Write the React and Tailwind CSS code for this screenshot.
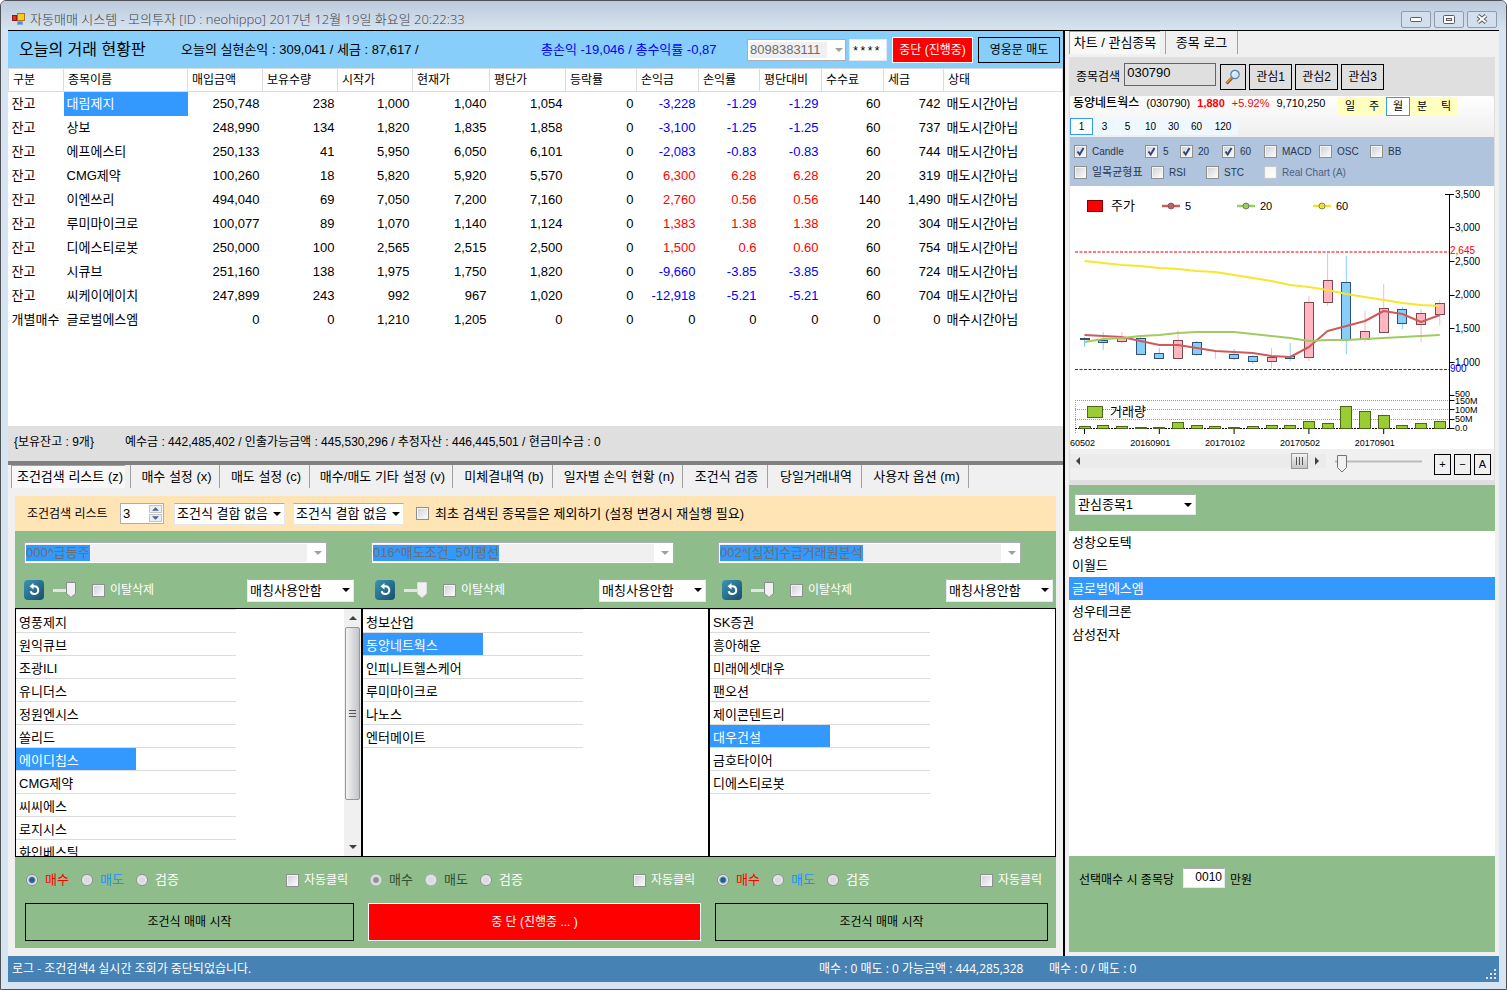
import { useState } from "react";
import clsx from "clsx";

const COLUMNS = [
  { label: "구분", width: "w-[55px]" },
  { label: "종목이름", width: "w-[124px]" },
  { label: "매입금액", width: "w-[75px]" },
  { label: "보유수량", width: "w-[75px]" },
  { label: "시작가", width: "w-[75px]" },
  { label: "현재가", width: "w-[77px]" },
  { label: "평단가", width: "w-[76px]" },
  { label: "등락률", width: "w-[71px]" },
  { label: "손익금", width: "w-[62px]" },
  { label: "손익률", width: "w-[61px]" },
  { label: "평단대비", width: "w-[62px]" },
  { label: "수수료", width: "w-[62px]" },
  { label: "세금", width: "w-[60px]" },
  { label: "상태", width: "" },
];

const ROWS = [
  ["잔고", "대림제지", "250,748", "238", "1,000", "1,040", "1,054", "0", "-3,228", "-1.29", "-1.29", "60", "742", "매도시간아님"],
  ["잔고", "상보", "248,990", "134", "1,820", "1,835", "1,858", "0", "-3,100", "-1.25", "-1.25", "60", "737", "매도시간아님"],
  ["잔고", "에프에스티", "250,133", "41", "5,950", "6,050", "6,101", "0", "-2,083", "-0.83", "-0.83", "60", "744", "매도시간아님"],
  ["잔고", "CMG제약", "100,260", "18", "5,820", "5,920", "5,570", "0", "6,300", "6.28", "6.28", "20", "319", "매도시간아님"],
  ["잔고", "이엔쓰리", "494,040", "69", "7,050", "7,200", "7,160", "0", "2,760", "0.56", "0.56", "140", "1,490", "매도시간아님"],
  ["잔고", "루미마이크로", "100,077", "89", "1,070", "1,140", "1,124", "0", "1,383", "1.38", "1.38", "20", "304", "매도시간아님"],
  ["잔고", "디에스티로봇", "250,000", "100", "2,565", "2,515", "2,500", "0", "1,500", "0.6", "0.60", "60", "754", "매도시간아님"],
  ["잔고", "시큐브", "251,160", "138", "1,975", "1,750", "1,820", "0", "-9,660", "-3.85", "-3.85", "60", "724", "매도시간아님"],
  ["잔고", "씨케이에이치", "247,899", "243", "992", "967", "1,020", "0", "-12,918", "-5.21", "-5.21", "60", "704", "매도시간아님"],
  ["개별매수", "글로벌에스엠", "0", "0", "1,210", "1,205", "0", "0", "0", "0", "0", "0", "0", "매수시간아님"],
];

const TABS = [
  { label: "조건검색 리스트 (z)", width: "w-[114px]" },
  { label: "매수 설정 (x)", width: "w-[90px]" },
  { label: "매도 설정 (c)", width: "w-[90px]" },
  { label: "매수/매도 기타 설정 (v)", width: "w-[143px]" },
  { label: "미체결내역 (b)", width: "w-[100px]" },
  { label: "일자별 손익 현황 (n)", width: "w-[130px]" },
  { label: "조건식 검증", width: "w-[85px]" },
  { label: "당일거래내역", width: "w-[94px]" },
  { label: "사용자 옵션 (m)", width: "w-[107px]" },
];

const PANELS = [
  {
    id: "p1",
    condition: "000^급등주",
    items: ["영풍제지", "원익큐브", "조광ILI", "유니더스", "정원엔시스", "쏠리드", "에이디칩스", "CMG제약", "씨씨에스", "로지시스", "화인베스틸"],
    selected: 6,
    scroll: true,
    tools: "pl-[9px] pr-2",
    radios: "pl-[11px]",
    action: "pl-[10px] pr-2",
  },
  {
    id: "p2",
    condition: "016^매도조건_5이평선",
    items: ["청보산업", "동양네트웍스", "인피니트헬스케어", "루미마이크로", "나노스", "엔터메이트"],
    selected: 1,
    running: true,
    tools: "pl-[13px] pr-[3px]",
    radios: "pl-2",
    action: "pl-[6px] pr-2",
  },
  {
    id: "p3",
    condition: "002^[실전]수급거래원분석",
    items: ["SK증권", "흥아해운", "미래에셋대우", "팬오션", "제이콘텐트리", "대우건설", "금호타이어", "디에스티로봇"],
    selected: 5,
    tools: "pl-[13px] pr-[3px]",
    radios: "pl-2",
    action: "pl-[6px] pr-2",
  },
];

const UP = "#ffb6c1";
const DOWN = "#87cefa";

// body top, body bottom, high, low
const CANDLES = [
  [152, 153, 151, 161, DOWN], [154, 156, 146, 164, DOWN], [152, 155, 146, 157, UP], [152, 168, 151, 169, DOWN],
  [167, 172, 162, 172, DOWN], [154, 172, 144, 173, UP], [156, 168, 155, 170, DOWN], [168, 168, 164, 173, UP],
  [168, 172, 163, 174, DOWN], [170, 175, 169, 178, DOWN], [171, 175, 162, 182, UP], [170, 172, 157, 175, DOWN],
  [116, 171, 110, 175, UP], [94, 116, 67, 120, UP], [96, 153, 70, 168, DOWN], [145, 153, 125, 156, UP],
  [122, 146, 98, 146, UP], [123, 137, 121, 143, DOWN], [127, 138, 123, 156, UP], [117, 128, 114, 139, UP],
];
const VOLUMES = [2, 3, 2, 1, 1, 6, 3, 2, 1, 2, 3, 3, 7, 5, 22, 17, 13, 3, 5, 7];
const MA5 = [149, 150, 151, 155, 159, 159, 162, 165, 166, 167, 170, 171, 161, 145, 140, 135, 125, 128, 136, 129];
const MA20 = [156, 153, 152, 150, 149, 147, 146, 146, 146, 148, 150, 152, 155, 154, 154, 153, 152, 151, 150, 149];
const MA60 = [75, 77, 79, 80, 82, 83, 85, 86, 89, 92, 95, 99, 101, 104, 108, 111, 114, 117, 119, 120];

const cx = (i) => 14.5 + 18.7 * i;
const points = (values) => values.map((v, i) => `${cx(i)},${v}`).join(" ");

const Arrow = ({ dir = "down", className }) => {
  const d = { down: "M0 0h8l-4 4z", up: "M0 4h8l-4 -4z", left: "M6 0v8l-4 -4z", right: "M2 0v8l4 -4z" }[dir];
  const tall = dir === "left" || dir === "right";
  return (
    <svg className={className} width="8" height={tall ? 8 : 4} viewBox={tall ? "0 0 8 8" : "0 0 8 4"} fill="currentColor" aria-hidden="true">
      <path d={d} />
    </svg>
  );
};

const Check = ({ label, checked, disabled, className, textClass }) => (
  <label className={clsx("flex items-center whitespace-nowrap", className)}>
    <span className="grid size-[13px] shrink-0">
      <input
        type="checkbox"
        defaultChecked={checked}
        disabled={disabled}
        className="peer col-start-1 row-start-1 size-[13px] appearance-none border border-[#8e8f8f] bg-linear-to-br from-[#cbcfd5] to-white shadow-[inset_0_0_0_1px_#f4f4f4] disabled:border-[#c5c9ce] disabled:from-[#f4f4f4]"
      />
      <svg className="pointer-events-none invisible col-start-1 row-start-1 peer-checked:visible" viewBox="0 0 13 13" fill="none" stroke="#31447c" strokeWidth="2" aria-hidden="true">
        <path d="M3.5 6.5l2.2 3 3.8-6.5" />
      </svg>
    </span>
    <span className={textClass}>{label}</span>
  </label>
);

const Select = ({ label, value, className }) => (
  <span className={clsx("relative block shrink-0", className)}>
    <select aria-label={label} className="block size-full appearance-none border border-[#e3e9ef] border-t-[#abadb3] bg-white pl-[2px] text-[13px] leading-none">
      <option>{value}</option>
    </select>
    <Arrow className="pointer-events-none absolute top-1/2 right-1 -mt-[2px]" />
  </span>
);

const Slider = ({ label, faded }) => (
  <span className="relative block h-[18px] w-[25px]">
    <input type="range" aria-label={label} defaultValue="100" disabled={faded} className="absolute inset-0 w-full opacity-0" />
    <svg className="pointer-events-none" width="25" height="18" viewBox="0 0 25 18" aria-hidden="true">
      <path d="M0 9.5h14" stroke="#e4e4e4" strokeWidth="3" />
      <path d="M13.5 1.5h9v11l-4.5 4-4.5-4z" fill="#f1f1f1" stroke={faded ? "#dddddd" : "#858b8e"} />
    </svg>
  </span>
);

const TitleBar = () => (
  <header className="flex h-[29px] items-center bg-linear-to-b from-[#bccadb] to-[#d6e3f0] pt-[7px] pr-[9px] pl-[11px]">
    <svg width="13" height="13" viewBox="0 0 13 13" aria-hidden="true">
      <rect x="5.5" y=".5" width="7" height="7" fill="#f7c73a" stroke="#a87a10" />
      <rect x=".5" y="2.5" width="4" height="5" fill="#e0311c" stroke="#94190c" />
      <rect x="5.5" y="8.5" width="5" height="3" fill="#4f86e8" stroke="#8fa9d8" />
    </svg>
    <h1 className="flex-1 pl-[5px] font-['Open_Sans','Noto_Sans_CJK_KR',sans-serif] text-[13px] leading-none font-light whitespace-nowrap text-[#3c4045]">
      자동매매 시스템 - 모의투자 [ID : neohippo] 2017년 12월 19일 화요일 20:22:33
    </h1>
    <div className="flex gap-[3px]">
      <button aria-label="최소화" className="grid h-[17px] w-[30px] place-items-center rounded-xs border border-[#8f9bab] bg-[#d3dfec]">
        <svg width="12" height="5" viewBox="0 0 12 5"><rect x=".5" y=".5" width="11" height="4" rx="1" fill="#fff" stroke="#575c68" /></svg>
      </button>
      <button aria-label="최대화" className="grid h-[17px] w-[30px] place-items-center rounded-xs border border-[#8f9bab] bg-[#d3dfec]">
        <svg width="12" height="9" viewBox="0 0 12 9">
          <rect x=".5" y=".5" width="11" height="8" rx="1" fill="#fff" stroke="#575c68" />
          <rect x="3.5" y="3.5" width="5" height="2" fill="#d3dfec" stroke="#575c68" />
        </svg>
      </button>
      <button aria-label="닫기" className="grid h-[17px] w-[30px] place-items-center rounded-xs border border-[#8f9bab] bg-[#d3dfec]">
        <svg width="12" height="10" viewBox="0 0 12 10">
          <path d="M2 1.500l8 7M10 1.500l-8 7" stroke="#575c68" strokeWidth="4" />
          <path d="M2.200 1.700l7.600 6.600M9.800 1.700l-7.600 6.600" stroke="#fff" strokeWidth="2" />
        </svg>
      </button>
    </div>
  </header>
);

const Summary = () => (
  <div className="flex h-[37px] shrink-0 items-center bg-[#87cefa] pr-[3px] pl-[11px] text-[13px] whitespace-nowrap">
    <h2 className="w-[162px] text-[16px]">오늘의 거래 현황판</h2>
    <p className="flex-1">오늘의 실현손익 : 309,041 / 세금 : 87,617 /</p>
    <p className="w-[206px] text-[#0000ff]">총손익 -19,046 / 총수익률 -0,87</p>
    <span className="relative mr-[3px] block h-[22px] w-[99px]">
      <select aria-label="계좌번호" disabled className="block size-full appearance-none border border-[#abadb3] bg-[#f0f0f0] pl-[2px] text-[13px] text-[#6d6d6d] opacity-100 shadow-[inset_-18px_0_0_0_#fff,inset_0_0_0_2px_#fff]">
        <option>8098383111</option>
      </select>
      <Arrow className="pointer-events-none absolute top-[9px] right-[3px] text-[#a0a0a0]" />
    </span>
    <input aria-label="비밀번호" defaultValue="****" className="mr-[5px] h-[22px] w-[38px] border border-[#e3e9ef] bg-white px-[2px] pt-1 font-['Liberation_Mono',monospace] text-[12px]" />
    <button className="mr-[5px] h-[26px] w-[81px] border border-white bg-[#ff0000] text-[12px] text-white">중단 (진행중)</button>
    <button className="h-[26px] w-[82px] border border-black text-[12px]">영웅문 매도</button>
  </div>
);

const HoldingsTable = () => (
  <div className="h-[358px] bg-white">
    <table className="w-full table-fixed border-collapse text-[13px] whitespace-nowrap">
      <thead>
        <tr className="h-[23px]">
          {COLUMNS.map((col) => (
            <th key={col.label} className={clsx("border border-[#dcdcdc] pl-1 text-left text-[12px] leading-none font-normal", col.width)}>
              {col.label}
            </th>
          ))}
        </tr>
      </thead>
      <tbody>
        {ROWS.map((row, r) => (
          <tr key={r} className="h-6">
            {row.map((cell, c) => {
              const text = c < 2 || c === 13;
              const profit = c >= 8 && c <= 10;
              return (
                <td
                  key={c}
                  className={clsx(
                    "p-0 leading-none",
                    text ? "pl-[3px]" : "pr-[3px] text-right",
                    profit && cell.startsWith("-") && "text-[#0000ff]",
                    profit && !cell.startsWith("-") && cell !== "0" && "text-[#ff0000]",
                    r === 0 && c === 1 && "bg-[#3399ff] text-white"
                  )}
                >
                  {cell}
                </td>
              );
            })}
          </tr>
        ))}
      </tbody>
    </table>
  </div>
);

const ConditionBar = () => (
  <div className="flex h-[35px] items-center bg-[#ffe4b5] pl-3 text-[12px] whitespace-nowrap">
    <label htmlFor="condition-count" className="w-[93px]">조건검색 리스트</label>
    <span className="mr-[10px] flex h-[21px] w-[44px] border border-[#abadb3] bg-white">
      <input id="condition-count" defaultValue="3" className="min-w-0 flex-1 pl-[2px] text-[13px]" />
      <span className="flex w-[15px] flex-col gap-px p-px text-[#4b5f97]">
        <button aria-label="증가" className="grid flex-1 place-items-center border border-[#c4c4c4] bg-[#eeeeee]"><Arrow dir="up" className="w-[7px]" /></button>
        <button aria-label="감소" className="grid flex-1 place-items-center border border-[#c4c4c4] bg-[#eeeeee]"><Arrow className="w-[7px]" /></button>
      </span>
    </span>
    <Select label="조건식 결합 1" value="조건식 결합 없음" className="mr-2 h-[22px] w-[111px]" />
    <Select label="조건식 결합 2" value="조건식 결합 없음" className="mr-3 h-[22px] w-[111px]" />
    <Check label="최초 검색된 종목들은 제외하기 (설정 변경시 재실행 필요)" textClass="pl-[6px] text-[13px]" />
  </div>
);

const StockList = ({ items, initial, scroll }) => {
  const [selected, setSelected] = useState(initial);
  return (
    <div className="flex h-[249px] overflow-hidden border border-black bg-white">
      <ul className="min-w-0 flex-1 overflow-hidden text-[13px]">
        {items.map((item, i) => (
          <li key={item} className="h-[23px] w-[220px] border-t border-[#dcdcdc] last:h-6 last:border-b">
            <button
              onClick={() => setSelected(i)}
              className={clsx("block h-[22px] w-[120px] pt-[2px] pl-[3px] text-left leading-none whitespace-nowrap", i === selected && "bg-[#3399ff] text-white")}
            >
              {item}
            </button>
          </li>
        ))}
      </ul>
      {scroll && (
        <div className="flex w-[17px] flex-col items-center bg-[#f0f0f0] text-[#404040]" aria-hidden="true">
          <div className="grid h-[18px] place-items-center"><Arrow dir="up" /></div>
          <div className="grid h-[173px] w-[15px] place-items-center rounded-xs border border-[#979797] bg-linear-to-r from-[#f3f3f3] to-[#c3c5c9]">
            <div className="h-[7px] w-[7px] border-y border-[#555] py-[2px]"><div className="border-t border-[#555]" /></div>
          </div>
          <div className="mt-auto grid h-[18px] place-items-center"><Arrow /></div>
        </div>
      )}
    </div>
  );
};

const Radio = ({ name, label, checked, disabled, textClass }) => (
  <label className="flex w-[55px] items-center">
    <input
      type="radio"
      name={name}
      defaultChecked={checked}
      disabled={disabled}
      className="size-3 appearance-none rounded-full border border-[#8e8f8f] bg-radial from-[#d9dde2] from-40% to-white checked:from-[#1f5f8a] checked:from-30% checked:to-[#e8eef2] checked:to-60% disabled:border-[#b5b9bd] disabled:checked:from-[#909090]"
    />
    <span className={clsx("pl-[7px]", textClass)}>{label}</span>
  </label>
);

const ConditionPanel = ({ panel }) => {
  const { id, condition, items, selected, scroll, running, tools, radios, action } = panel;
  return (
    <section className="min-w-0">
      <div className="h-[77px] pt-[11px]">
        <div className="ml-[9px] flex h-[22px] w-[303px] items-center border border-[#abadb3] bg-white p-px">
          <div className="flex h-full min-w-0 flex-1 items-center bg-[#f0f0f0]">
            <input aria-label="조건식" readOnly value={condition} className="h-4 [field-sizing:content] bg-[#3399ff] text-[13px] text-[#6d6d6d]" />
          </div>
          <button aria-label="조건식 열기" className="grid w-[18px] place-items-center pl-1 text-[#a0a0a0]"><Arrow /></button>
        </div>
        <div className={clsx("mt-[14px] flex h-[24px] items-center", tools)}>
          <button aria-label="새로고침" className="mr-[9px] grid size-5 place-items-center rounded-sm bg-linear-to-br from-[#3d94b8] to-[#174f6b]">
            <svg width="14" height="14" viewBox="0 0 14 14" aria-hidden="true">
              <path d="M5.500 3.200h2a3.900 3.900 0 1 1-3.900 5" fill="none" stroke="#fff" strokeWidth="2" />
              <path d="M6.500 0v6.400l-4-3.200z" fill="#fff" />
            </svg>
          </button>
          <Slider label="감도" faded={running} />
          <Check label="이탈삭제" className="ml-[14px] flex-1" textClass="pl-[5px] text-[12px] text-white" />
          <Select label="매칭 사용" value="매칭사용안함" className="h-[23px] w-[107px]" />
        </div>
      </div>
      <StockList items={items} initial={selected} scroll={scroll} />
      <div className="h-[91px]">
        <div className={clsx("flex h-[46px] items-center text-[13px] text-white", radios)}>
          <Radio name={id} label="매수" checked disabled={running} textClass={running ? "text-[#2f4f2f]" : "text-[#ff0000]"} />
          <Radio name={id} label="매도" disabled={running} textClass={running ? "text-[#2f4f2f]" : "text-[#1e90ff]"} />
          <Radio name={id} label="검증" />
          <Check label="자동클릭" className="ml-auto w-[76px]" textClass="pl-[5px] text-[12px]" />
        </div>
        <div className={action}>
          <button className={clsx("h-[38px] w-full border text-[12px]", running ? "border-white bg-[#ff0000] text-white" : "border-black")}>
            {running ? "중 단 (진행중 ... )" : "조건식 매매 시작"}
          </button>
        </div>
      </div>
    </section>
  );
};

const SearchBar = () => (
  <div className="flex h-[39px] items-center gap-[3px] bg-[#dfdfdf] pl-[7px] text-[12px]">
    <label htmlFor="stock-code" className="mr-[1px] whitespace-nowrap">종목검색</label>
    <input id="stock-code" defaultValue="030790" className="mb-[5px] h-[23px] w-[92px] border border-[#646464] px-[2px] pb-1 text-[13px]" />
    <button aria-label="검색" className="ml-[1px] grid h-[26px] w-[26px] place-items-center border border-black">
      <svg width="16" height="16" viewBox="0 0 16 16" aria-hidden="true">
        <path d="M1.500 14.500L7 9" stroke="#7c4a1e" strokeWidth="3" />
        <path d="M1.500 14L6.500 9" stroke="#f0962e" strokeWidth="1.500" />
        <circle cx="10" cy="5.500" r="4.200" fill="#cfe9fb" stroke="#5b7fa8" strokeWidth="1.200" />
        <path d="M7.800 5a2.400 2.400 0 0 1 2.400-2" stroke="#fff" fill="none" />
      </svg>
    </button>
    {["관심1", "관심2", "관심3"].map((name) => (
      <button key={name} className="h-[26px] w-[43px] border border-black">{name}</button>
    ))}
  </div>
);

const QuoteBar = () => {
  const [period, setPeriod] = useState("월");
  const [minute, setMinute] = useState("1");
  return (
    <div className="h-[41px] rounded-sm bg-linear-to-b from-white to-[#eeeeee] text-[11px] whitespace-nowrap">
      <div className="flex h-[22px] items-start">
        <div className="flex w-[268px] gap-[7px] pl-[3px] leading-[15px]">
          <b className="text-[12px] font-medium">동양네트웍스</b>
          <span>(030790)</span>
          <b className="text-[#ff0000]">1,880</b>
          <span className="text-[#ff0000]">+5.92%</span>
          <span>9,710,250</span>
        </div>
        <div className="mt-px flex bg-[#ffffc0]">
          {["일", "주", "월", "분", "틱"].map((p) => (
            <button key={p} onClick={() => setPeriod(p)} className={clsx("h-[19px] w-6 leading-none", p === period && "border border-[#3399ff] bg-white")}>
              {p}
            </button>
          ))}
        </div>
      </div>
      <div className="flex w-[168px] bg-[#f0f8ff]">
        {["1", "3", "5", "10", "30", "60", "120"].map((m) => (
          <button key={m} onClick={() => setMinute(m)} className={clsx("h-[17px] w-[23px] text-[10px] leading-none last:flex-1", m === minute && "border border-[#3399ff] bg-white")}>
            {m}
          </button>
        ))}
      </div>
    </div>
  );
};

const IndicatorBar = () => (
  <div className="flex h-[49px] flex-col justify-center gap-2 bg-[#b0c4de] pl-1 text-[10px] leading-[13px] text-[#27384f]">
    <div className="flex">
      <Check label="Candle" checked className="w-[71px]" textClass="pl-[5px]" />
      <Check label="5" checked className="w-[35px]" textClass="pl-[5px]" />
      <Check label="20" checked className="w-[42px]" textClass="pl-[5px]" />
      <Check label="60" checked className="w-[42px]" textClass="pl-[5px]" />
      <Check label="MACD" className="w-[55px]" textClass="pl-[5px]" />
      <Check label="OSC" className="w-[51px]" textClass="pl-[5px]" />
      <Check label="BB" textClass="pl-[5px]" />
    </div>
    <div className="flex">
      <Check label="일목균형표" className="w-[77px]" textClass="pl-[5px] text-[11px]" />
      <Check label="RSI" className="w-[55px]" textClass="pl-[5px]" />
      <Check label="STC" className="w-[58px]" textClass="pl-[5px]" />
      <Check label="Real Chart (A)" disabled textClass="pl-[5px] text-[#4a6080]" />
    </div>
  </div>
);

const Chart = () => (
  <svg viewBox="0 0 424 263" className="block w-full bg-white font-['Liberation_Sans',sans-serif]" fontSize="9" role="img" aria-label="주가 차트">
    <rect x="17.500" y="14.500" width="15" height="11" fill="#ff0000" stroke="#800000" />
    <text x="41" y="24" fontSize="13" fontFamily="Noto Sans CJK KR">주가</text>
    {[[92, "#cd5c5c", "5"], [167, "#9acd60", "20"], [243, "#f5e02c", "60"]].map(([x, color, name]) => (
      <g key={name}>
        <path d={`M${x} 20h18`} stroke={color} strokeWidth="2.500" />
        <circle cx={x + 9} cy="20" r="3" fill={color} stroke="#555" strokeOpacity=".7" />
        <text x={x + 23} y="24" fontSize="11">{name}</text>
      </g>
    ))}
    <path d="M5 66h374" stroke="#ff5050" strokeWidth="1.500" strokeDasharray="3 1.500" />
    <path d="M5 183.500h374" stroke="#2020ff" strokeDasharray="3 1.500" />
    {CANDLES.map(([top, bottom, high, low, color], i) => (
      <g key={i}>
        <path d={`M${cx(i)} ${high}V${low}`} stroke={color} />
        <rect x={Math.round(cx(i) - 5) + 0.5} y={top + 0.5} width="9" height={bottom - top} fill={color} stroke={color === UP ? "#7a4a52" : "#2c5575"} />
      </g>
    ))}
    <g fill="none" strokeWidth="2" strokeLinejoin="round">
      <polyline points={points(MA5)} stroke="#d05a5a" />
      <polyline points={points(MA20)} stroke="#a0cb62" />
      <polyline points={points(MA60)} stroke="#f8e62e" />
    </g>
    <path d="M375 8.500h9M379.500 8v235M379.500 41.500h5M379.500 75.500h5M379.500 109.500h5M379.500 142.500h5M379.500 176.500h5M379.500 209.500h5M379.500 214.500h5M379.500 223.500h5M379.500 233.500h5M379.500 242.500h5" stroke="#000" fill="none" />
    {[["3,500", 8], ["3,000", 41], ["2,500", 75], ["2,000", 108], ["1,500", 142], ["1,000", 176]].map(([label, y]) => (
      <text key={label} x="385" y={y + 4} fontSize="10">{label}</text>
    ))}
    {[["500", 208], ["150M", 215], ["100M", 224], ["50M", 233], ["0.0", 242]].map(([label, y]) => (
      <text key={label} x="385" y={y + 3}>{label}</text>
    ))}
    <text x="380" y="68" fontSize="10" fill="#ff0000">2,645</text>
    <text x="380" y="186" fontSize="10" fill="#0000ff">900</text>
    <path d="M5 214.500h374M5 223.500h374M5 233.500h374M5.500 214v34" stroke="#999" strokeDasharray="1 1" fill="none" />
    <path d="M5 242.500h374" stroke="#000" strokeDasharray="2 1" />
    {VOLUMES.map((v, i) => (
      <rect key={i} x={Math.round(cx(i) - 6) + 0.5} y={242.5 - v} width="11" height={v} fill="#9acd32" stroke="#4d6619" />
    ))}
    <rect x="17.500" y="220.500" width="15" height="11" fill="#9acd32" stroke="#4d6619" />
    <text x="40" y="230" fontSize="13" fontFamily="Noto Sans CJK KR">거래량</text>
    <path d="M14.500 243v5" stroke="#000" />
    <text x="0" y="260">60502</text>
    {[["20160901", 4], ["20170102", 8], ["20170502", 12], ["20170901", 16]].map(([label, i]) => (
      <g key={label}>
        <path d={`M${cx(i)} 243v5`} stroke="#000" />
        <text x={cx(i) - 9} y="260" textAnchor="middle">{label}</text>
      </g>
    ))}
  </svg>
);

const ChartControls = () => (
  <div className="flex h-[31px] items-start gap-[3px] bg-[#f0f0f0] pt-[5px] pr-[3px] text-[11px]">
    <div className="flex h-[14px] w-[256px] items-center bg-[#ebebeb] text-[#404040]" aria-hidden="true">
      <Arrow dir="left" className="ml-1 shrink-0" />
      <div className="ml-auto flex h-4 w-[17px] shrink-0 items-center justify-center gap-[2px] border border-[#979797] bg-linear-to-b from-[#f3f3f3] to-[#c3c5c9]">
        <i className="h-2 w-px bg-[#555]" />
        <i className="h-2 w-px bg-[#555]" />
        <i className="h-2 w-px bg-[#555]" />
      </div>
      <Arrow dir="right" className="mx-[5px] shrink-0" />
    </div>
    <span className="relative mr-auto ml-[6px] h-[20px] w-[87px]">
      <input type="range" aria-label="차트 확대" defaultValue="5" className="absolute inset-0 w-full opacity-0" />
      <svg className="pointer-events-none" width="87" height="20" viewBox="0 0 87 20" aria-hidden="true">
        <path d="M0 7.500h87" stroke="#b8bcbf" strokeWidth="2" />
        <path d="M2.500 1.500h9v12l-4.500 4.500-4.500-4.500z" fill="#f1f1f1" stroke="#6f7477" />
      </svg>
    </span>
    {["+", "−", "A"].map((t) => (
      <button key={t} className="h-[21px] w-[17px] border border-black">{t}</button>
    ))}
  </div>
);

const Watchlist = () => {
  const [selected, setSelected] = useState(2);
  return (
    <>
      <div className="h-[46px] bg-[#8fbc8b] pt-[9px] pl-[6px]">
        <Select label="관심종목" value="관심종목1" className="h-[21px] w-[121px]" />
      </div>
      <ul className="min-h-[325px] flex-1 bg-white text-[13px]">
        {["성창오토텍", "이월드", "글로벌에스엠", "성우테크론", "삼성전자"].map((name, i) => (
          <li key={name}>
            <button onClick={() => setSelected(i)} className={clsx("block h-[23px] w-full pl-[3px] text-left", i === selected && "bg-[#3399ff] text-white")}>
              {name}
            </button>
          </li>
        ))}
      </ul>
      <div className="flex h-[96px] items-start bg-[#8fbc8b] pt-3 pl-[10px] text-[12px]">
        <label htmlFor="buy-amount" className="w-[104px] pt-[3px] whitespace-nowrap">선택매수 시 종목당</label>
        <input id="buy-amount" defaultValue="0010" className="mr-[5px] h-[20px] w-[42px] border border-[#e3e9ef] border-t-[#abadb3] bg-white pr-[2px] pb-[2px] text-right text-[12px]" />
        <span className="pt-[3px]">만원</span>
      </div>
    </>
  );
};

const App = () => {
  const [tab, setTab] = useState(0);
  return (
    <div className="flex min-h-screen flex-col overflow-hidden rounded-t-md border border-[#4f5257] bg-[#d7e4f2] font-['Liberation_Sans','Noto_Sans_CJK_KR',sans-serif] text-black">
      <TitleBar />
      <div className="mx-[7px] mb-[7px] flex flex-1 flex-col border-t border-black bg-[#f0f0f0]">
        <div className="flex flex-1">
          <main className="flex min-w-0 flex-1 flex-col">
            <Summary />
            <HoldingsTable />
            <div className="flex h-[39px] items-center border-b-4 border-[#808080] bg-[#dfdfdf] pb-1 pl-[6px] text-[12px] whitespace-nowrap">
              <span className="w-[111px]">{"{보유잔고 : 9개}"}</span>
              <span>예수금 : 442,485,402 / 인출가능금액 : 445,530,296 / 추정자산 : 446,445,501 / 현금미수금 : 0</span>
            </div>
            <nav className="flex h-[31px] items-start pl-[3px] text-[13px] whitespace-nowrap">
              {TABS.map((t, i) => (
                <button
                  key={t.label}
                  onClick={() => setTab(i)}
                  className={clsx(
                    "h-[23px] border-[#a0a0a0] pl-[3px]",
                    t.width,
                    i === 0 && "mr-[5px]",
                    i === 1 && "border-l",
                    i === tab ? "border-t border-l bg-[#f8f8f8]" : "border-r"
                  )}
                >
                  {t.label}
                </button>
              ))}
            </nav>
            <div className="mx-[7px] mb-2 flex-1 bg-[#8fbc8b]">
              <ConditionBar />
              <div className="grid grid-cols-3">
                {PANELS.map((panel) => (
                  <ConditionPanel key={panel.id} panel={panel} />
                ))}
              </div>
            </div>
          </main>
          <aside className="flex w-[436px] shrink-0 flex-col border-l-2 border-black pr-1 pb-1 pl-1">
            <nav className="flex h-[26px] items-start text-[13px] whitespace-nowrap">
              <button className="h-[23px] w-[91px] border-t border-l border-[#a0a0a0] bg-[#f8f8f8]">차트 / 관심종목</button>
              <button className="ml-[5px] h-[23px] w-[73px] border-x border-[#a0a0a0]">종목 로그</button>
            </nav>
            <SearchBar />
            <div className="border-x border-b-[5px] border-[#dfdfdf]">
              <QuoteBar />
              <IndicatorBar />
              <Chart />
              <ChartControls />
            </div>
            <Watchlist />
          </aside>
        </div>
        <footer className="flex h-[26px] items-center bg-[#4682b4] pl-1 font-['Open_Sans','Noto_Sans_CJK_KR',sans-serif] text-[12px] whitespace-nowrap text-white">
          <span className="w-[807px]">로그 - 조건검색4 실시간 조회가 중단되었습니다.</span>
          <span className="w-[230px]">매수 : 0 매도 : 0 가능금액 : 444,285,328</span>
          <span className="flex-1">매수 : 0 / 매도 : 0</span>
          <svg className="mr-[2px] self-end pb-[2px]" width="11" height="13" viewBox="0 0 11 11" fill="#e4e4e4" aria-hidden="true">
            <path d="M8 0h2v2h-2zM4 4h2v2h-2zM8 4h2v2h-2zM0 8h2v2h-2zM4 8h2v2h-2zM8 8h2v2h-2z" />
          </svg>
        </footer>
      </div>
    </div>
  );
};

export default App;
